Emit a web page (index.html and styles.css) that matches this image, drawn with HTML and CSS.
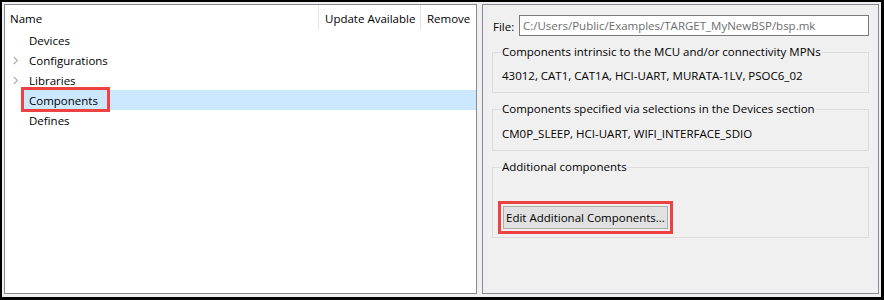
FILE: index.html
```html
<!DOCTYPE html>
<html lang="en">
<head>
<meta charset="utf-8">
<title>BSP Assistant – Components</title>
<link rel="stylesheet" href="styles.css">
</head>
<body>
<div class="frame">
  <div class="tree-panel">
    <div class="tree-header">
      <div class="col col-name">Name</div>
      <div class="col col-update">Update Available</div>
      <div class="col col-remove">Remove</div>
    </div>
    <ul class="tree">
      <li class="row"><span class="twisty"></span><span class="label">Devices</span></li>
      <li class="row"><span class="twisty"><svg class="chev" width="5" height="9" viewBox="0 0 5 9"><path d="M0.8 0.8 L4.2 4.5 L0.8 8.2" fill="none" stroke="#a2a2a2" stroke-width="1.1"/></svg></span><span class="label">Configurations</span></li>
      <li class="row"><span class="twisty"><svg class="chev" width="5" height="9" viewBox="0 0 5 9"><path d="M0.8 0.8 L4.2 4.5 L0.8 8.2" fill="none" stroke="#a2a2a2" stroke-width="1.1"/></svg></span><span class="label">Libraries</span></li>
      <li class="row selected"><span class="twisty"></span><span class="label"><span class="annot">Components</span></span></li>
      <li class="row"><span class="twisty"></span><span class="label">Defines</span></li>
    </ul>
  </div>
  <div class="detail-panel">
    <div class="file-row">
      <span class="file-label">File:</span>
      <div class="file-input">C:/Users/Public/Examples/TARGET_MyNewBSP/bsp.mk</div>
    </div>
    <fieldset class="group g1">
      <legend>Components intrinsic to the MCU and/or connectivity MPNs</legend>
      <div class="group-text">43012, CAT1, CAT1A, HCI-UART, MURATA-1LV, PSOC6_02</div>
    </fieldset>
    <fieldset class="group g2">
      <legend>Components specified via selections in the Devices section</legend>
      <div class="group-text">CM0P_SLEEP, HCI-UART, WIFI_INTERFACE_SDIO</div>
    </fieldset>
    <fieldset class="group g3">
      <legend>Additional components</legend>
      <button class="btn" type="button">Edit Additional Components...</button>
    </fieldset>
  </div>
</div>
</body>
</html>
```
FILE: styles.css
```css
html, body {
  margin: 0;
  padding: 0;
}
body {
  background: #000;
  width: 884px;
  height: 300px;
  overflow: hidden;
  font-family: "Segoe UI", "Open Sans", "Noto Sans", sans-serif;
  font-size: 11.5px;
  color: #000;
}
.frame {
  box-sizing: border-box;
  margin: 2px 3px 3px 2px;
  height: 295px;
  background: #f0f0f0;
  padding: 2px 2px 3px 2px;
  display: flex;
  gap: 5px;
}
.tree-panel {
  box-sizing: border-box;
  width: 473px;
  flex: none;
  background: #fff;
  border: 1px solid #898994;
}
.tree-header {
  display: flex;
  height: 25px;
}
.col {
  box-sizing: border-box;
  padding-top: 2px;
  line-height: 23px;
  white-space: nowrap;
}
.col-name {
  width: 313px;
  padding-left: 5px;
}
.col-update {
  width: 102px;
  padding-left: 6px;
  border-left: 1px solid #e5e5e5;
}
.col-remove {
  flex: 1;
  padding-left: 6px;
  border-left: 1px solid #e5e5e5;
}
.tree {
  list-style: none;
  margin: 0;
  padding: 0;
}
.row {
  display: flex;
  height: 20px;
  align-items: stretch;
}
.twisty {
  width: 19px;
  flex: none;
  display: flex;
  align-items: center;
  padding: 1px 0 0 8px;
  box-sizing: border-box;
}
.chev {
  display: block;
}
.label {
  box-sizing: border-box;
  flex: 1;
  padding: 1px 0 0 5px;
  line-height: 19px;
  white-space: nowrap;
}
.selected .label {
  background: #cce8ff;
}
.annot {
  position: relative;
  display: inline-block;
}
.annot::after {
  content: "";
  position: absolute;
  left: -8px;
  right: -12px;
  top: -4px;
  bottom: -2px;
  border: 3px solid #ee4242;
}
.detail-panel {
  box-sizing: border-box;
  flex: 1;
  border: 1px solid #898994;
  background: #f0f0f0;
  padding: 10px 9px 0 9px;
  display: flex;
  flex-direction: column;
}
.file-row {
  display: flex;
  align-items: center;
  height: 21px;
}
.file-label {
  margin-left: 1px;
  width: 26px;
  flex: none;
  padding-top: 1px;
}
.file-input {
  box-sizing: border-box;
  flex: 1;
  height: 21px;
  border: 1px solid #7a7a7a;
  background: #fff;
  color: #6d6d6d;
  line-height: 20px;
  padding-left: 3px;
  white-space: nowrap;
  overflow: hidden;
}
.group {
  margin: 0;
  border: 1px solid #dcdcdc;
  padding: 0 9px 8px 9px;
  min-width: 0;
}
.group legend {
  padding: 0 1px;
  margin-left: -1px;
  line-height: 16px;
}
.g1 { margin-top: 8px; }
.g2 { margin-top: 8px; padding-bottom: 8px; }
.g3 { margin-top: 8px; padding-bottom: 8px; }
.group-text {
  margin-top: 8px;
  line-height: 16px;
  white-space: nowrap;
}
.g2 .group-text { margin-top: 9px; }
.btn {
  box-sizing: border-box;
  display: block;
  margin: 31px 0 0 1px;
  width: 165px;
  height: 23px;
  padding: 0 0 0 2px;
  background: #e1e1e1;
  border: 1px solid #adadad;
  border-radius: 0;
  font: inherit;
  color: #000;
  text-align: left;
  white-space: nowrap;
  overflow: visible;
  outline: 3px solid #ee4242;
  outline-offset: 2px;
}
```
